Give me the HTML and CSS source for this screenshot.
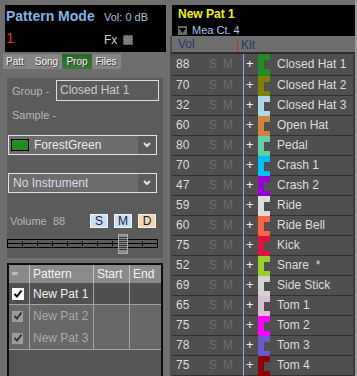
FILE: index.html
```html
<!DOCTYPE html>
<html lang="en">
<head>
    <meta charset="UTF-8">
    <meta name="viewport" content="width=device-width, initial-scale=1.0">
    <title>Pattern Mode</title>
    <link rel="stylesheet" href="styles.css">
</head>
<body>
    <div class="app">
        <div class="left">
            <div class="mode-head">
                <div class="mode-top">
                    <span class="mode-title">Pattern Mode</span>
                    <span class="vol-db">Vol: 0 dB</span>
                </div>
                <div class="mode-bottom">
                    <span class="pat-num">1</span>
                    <span class="fx">Fx</span>
                    <span class="fx-box"></span>
                </div>
            </div>

            <div class="tabs">
                <span class="tab tab-patt">Patt</span>
                <span class="tab tab-song">Song</span>
                <span class="tab tab-prop active">Prop</span>
                <span class="tab tab-files">Files</span>
            </div>

            <div class="props">
                <div class="field-row">
                    <span class="label">Group -</span>
                    <div class="text-box">Closed Hat 1</div>
                </div>
                <div class="label sample">Sample -</div>

                <div class="select first">
                    <span class="color-chip"></span>
                    <span class="select-text">ForestGreen</span>
                    <span class="select-btn">
                        <svg width="8" height="6" viewBox="0 0 8 6"><polyline points="1,1 4,4 7,1" fill="none" stroke="#e2e2e2" stroke-width="2"/></svg>
                    </span>
                </div>
                <div class="select second">
                    <span class="select-text plain">No Instrument</span>
                    <span class="select-btn">
                        <svg width="8" height="6" viewBox="0 0 8 6"><polyline points="1,1 4,4 7,1" fill="none" stroke="#e2e2e2" stroke-width="2"/></svg>
                    </span>
                </div>

                <div class="volume-row">
                    <span class="label vol-label">Volume</span>
                    <span class="label vol-val">88</span>
                    <span class="smd">S</span>
                    <span class="smd">M</span>
                    <span class="smd smd-d">D</span>
                </div>

                <svg class="slider" width="151" height="20" viewBox="0 0 151 20">
                    <rect x="0.5" y="5.5" width="150" height="8" fill="#5b5b5b" stroke="#000"/>
                    <line x1="0" y1="9.5" x2="151" y2="9.5" stroke="#000"/>
                    <g stroke="#000">
                        <line x1="15.5" y1="7" x2="15.5" y2="12"/>
                        <line x1="30.5" y1="7" x2="30.5" y2="12"/>
                        <line x1="45.5" y1="7" x2="45.5" y2="12"/>
                        <line x1="60.5" y1="7" x2="60.5" y2="12"/>
                        <line x1="75.5" y1="7" x2="75.5" y2="12"/>
                        <line x1="90.5" y1="7" x2="90.5" y2="12"/>
                        <line x1="105.5" y1="7" x2="105.5" y2="12"/>
                        <line x1="135.5" y1="7" x2="135.5" y2="12"/>
                    </g>
                    <rect x="111.5" y="0.5" width="9" height="19" fill="#8e8e8e" stroke="#a9a9a9"/>
                    <g stroke="#333">
                        <line x1="112" y1="3.5" x2="120" y2="3.5"/>
                        <line x1="112" y1="5.5" x2="120" y2="5.5"/>
                        <line x1="112" y1="7.5" x2="120" y2="7.5"/>
                        <line x1="112" y1="9.5" x2="120" y2="9.5"/>
                        <line x1="112" y1="11.5" x2="120" y2="11.5"/>
                        <line x1="112" y1="13.5" x2="120" y2="13.5"/>
                        <line x1="112" y1="15.5" x2="120" y2="15.5"/>
                    </g>
                </svg>
            </div>

            <div class="pattern-list">
                <div class="pl-row pl-head">
                    <span class="pl-cell inf">&#8734;</span>
                    <span class="pl-cell">Pattern</span>
                    <span class="pl-cell">Start</span>
                    <span class="pl-cell last">End</span>
                </div>
                <div class="pl-row current">
                    <span class="pl-cell"><span class="check"><svg width="10" height="10" viewBox="0 0 10 10"><path d="M1.5 5 L4 7.5 L8.5 1.5" fill="none" stroke="#000" stroke-width="2"/></svg></span></span>
                    <span class="pl-cell">New Pat 1</span>
                    <span class="pl-cell"></span>
                    <span class="pl-cell last"></span>
                </div>
                <div class="pl-row dim">
                    <span class="pl-cell"><span class="check"><svg width="10" height="10" viewBox="0 0 10 10"><path d="M1.5 5 L4 7.5 L8.5 1.5" fill="none" stroke="#333" stroke-width="2"/></svg></span></span>
                    <span class="pl-cell">New Pat 2</span>
                    <span class="pl-cell"></span>
                    <span class="pl-cell last"></span>
                </div>
                <div class="pl-row dim end">
                    <span class="pl-cell"><span class="check"><svg width="10" height="10" viewBox="0 0 10 10"><path d="M1.5 5 L4 7.5 L8.5 1.5" fill="none" stroke="#333" stroke-width="2"/></svg></span></span>
                    <span class="pl-cell">New Pat 3</span>
                    <span class="pl-cell"></span>
                    <span class="pl-cell last"></span>
                </div>
            </div>
        </div>

        <div class="right">
            <div class="pat-head">
                <div class="pat-name">New Pat 1</div>
                <div class="mea">
                    <span class="drop"><svg width="7" height="5" viewBox="0 0 7 5"><polygon points="0,0 7,0 3.5,5" fill="#000"/></svg></span>
                    <span>Mea Ct. 4</span>
                </div>
            </div>
            <div class="col-head">
                <span class="ch-vol">Vol</span>
                <span class="ch-kit">Kit</span>
            </div>
            <div class="kit">
                <div class="kit-row first"><span class="k-vol">88</span><span class="k-s">S</span><span class="k-m">M</span><span class="k-plus">+</span><span class="swatch" style="background-color:#228b22"></span><span class="k-name">Closed Hat 1</span></div>
                <div class="kit-row"><span class="k-vol">70</span><span class="k-s">S</span><span class="k-m">M</span><span class="k-plus">+</span><span class="swatch" style="background-color:#808000"></span><span class="k-name">Closed Hat 2</span></div>
                <div class="kit-row"><span class="k-vol">32</span><span class="k-s">S</span><span class="k-m">M</span><span class="k-plus">+</span><span class="swatch" style="background-color:#add8e6"></span><span class="k-name">Closed Hat 3</span></div>
                <div class="kit-row"><span class="k-vol">60</span><span class="k-s">S</span><span class="k-m">M</span><span class="k-plus">+</span><span class="swatch" style="background-color:#cd853f"></span><span class="k-name">Open Hat</span></div>
                <div class="kit-row"><span class="k-vol">80</span><span class="k-s">S</span><span class="k-m">M</span><span class="k-plus">+</span><span class="swatch" style="background-color:#66cdaa"></span><span class="k-name">Pedal</span></div>
                <div class="kit-row"><span class="k-vol">70</span><span class="k-s">S</span><span class="k-m">M</span><span class="k-plus">+</span><span class="swatch" style="background-color:#00bfff"></span><span class="k-name">Crash 1</span></div>
                <div class="kit-row"><span class="k-vol">47</span><span class="k-s">S</span><span class="k-m">M</span><span class="k-plus">+</span><span class="swatch" style="background-color:#9400d3"></span><span class="k-name">Crash 2</span></div>
                <div class="kit-row"><span class="k-vol">59</span><span class="k-s">S</span><span class="k-m">M</span><span class="k-plus">+</span><span class="swatch" style="background-color:#dcdcdc"></span><span class="k-name">Ride</span></div>
                <div class="kit-row"><span class="k-vol">60</span><span class="k-s">S</span><span class="k-m">M</span><span class="k-plus">+</span><span class="swatch" style="background-color:#ff6347"></span><span class="k-name">Ride Bell</span></div>
                <div class="kit-row"><span class="k-vol">75</span><span class="k-s">S</span><span class="k-m">M</span><span class="k-plus">+</span><span class="swatch" style="background-color:#dc143c"></span><span class="k-name">Kick</span></div>
                <div class="kit-row"><span class="k-vol">52</span><span class="k-s">S</span><span class="k-m">M</span><span class="k-plus">+</span><span class="swatch" style="background-color:#9acd32"></span><span class="k-name">Snare&nbsp; *</span></div>
                <div class="kit-row"><span class="k-vol">69</span><span class="k-s">S</span><span class="k-m">M</span><span class="k-plus">+</span><span class="swatch" style="background-color:#d3d3d3"></span><span class="k-name">Side Stick</span></div>
                <div class="kit-row"><span class="k-vol">65</span><span class="k-s">S</span><span class="k-m">M</span><span class="k-plus">+</span><span class="swatch" style="background-color:#d8bfd8"></span><span class="k-name">Tom 1</span></div>
                <div class="kit-row"><span class="k-vol">75</span><span class="k-s">S</span><span class="k-m">M</span><span class="k-plus">+</span><span class="swatch" style="background-color:#ff00ff"></span><span class="k-name">Tom 2</span></div>
                <div class="kit-row"><span class="k-vol">78</span><span class="k-s">S</span><span class="k-m">M</span><span class="k-plus">+</span><span class="swatch" style="background-color:#6a5acd"></span><span class="k-name">Tom 3</span></div>
                <div class="kit-row"><span class="k-vol">75</span><span class="k-s">S</span><span class="k-m">M</span><span class="k-plus">+</span><span class="swatch" style="background-color:#8b0000"></span><span class="k-name">Tom 4</span></div>
            </div>
        </div>
    </div>
</body>
</html>
```

FILE: styles.css
```css
body {
    margin: 0;
    width: 357px;
    height: 376px;
    overflow: hidden;
    background: linear-gradient(to left, #9c9c9c 2px, #6e6e6e 2px);
    font-family: 'Liberation Sans', Arial, sans-serif;
    font-size: 12px;
}
.app { display: flex; height: 376px; padding-top: 5px; box-sizing: border-box; }

/* left side */
.left { width: 166px; display: flex; flex-direction: column; }
.mode-head { margin-left: 5px; width: 161px; height: 47px; background: #000; box-sizing: border-box; padding: 3px 0 0 1px; }
.mode-top { display: flex; align-items: baseline; height: 18px; }
.mode-title { width: 98px; font-size: 14px; font-weight: bold; color: #82b4e6; }
.vol-db { font-size: 11px; color: #a9c1dc; }
.mode-bottom { display: flex; align-items: center; margin-top: 4px; height: 14px; }
.pat-num { width: 98px; font-size: 15px; color: #e8342c; }
.fx { color: #cfcfcf; font-size: 12px; width: 19px; margin-top: 6px; }
.fx-box { width: 8px; height: 8px; background: #7d7d7d; border: 1px dotted #3a3a3a; margin-top: 6px; }

.tabs { display: flex; margin: 2px 0 0 3px; width: 118px; height: 15px; background: #858585; }
.tab { font-size: 10px; line-height: 15px; text-align: center; color: #f2f2f2; text-shadow: 1px 1px 0 #3c3c3c; }
.tab-patt { width: 24px; }
.tab-song { width: 31px; margin-left: 4px; }
.tab-prop { width: 30px; }
.tab-files { width: 28px; }
.tab.active { background: linear-gradient(#236823, #3a7a3a); }

.props { margin: 9px 0 0 7px; width: 156px; height: 180px; flex: none; background: #5b5b5b; box-sizing: border-box; padding-top: 2px; }
.label { color: #bdb5ad; font-size: 11px; }
.field-row { display: flex; align-items: center; height: 21px; }
.field-row .label { width: 49px; padding-left: 5px; box-sizing: border-box; }
.text-box { width: 103px; height: 21px; box-sizing: border-box; border: 1px solid #dcdcdc; color: #c9c9c9; padding-left: 3px; line-height: 19px; font-size: 12px; }
.sample { margin-top: 7px; padding-left: 5px; line-height: 14px; }

.select { display: flex; align-items: center; margin-left: 1px; width: 149px; height: 20px; border: 1px solid #e2e2e2; box-sizing: border-box; background: #6d6d6d; }
.select.first { margin-top: 13px; }
.select.second { margin-top: 18px; }
.color-chip { width: 16px; height: 10px; background: #228b22; border: 1px solid #000; margin: 0 5px 0 2px; }
.select-text { flex: 1; color: #ececec; font-size: 12px; }
.select-text.plain { padding-left: 4px; color: #dcdce8; }
.select-btn { width: 18px; height: 18px; background: #5b5b5b; display: flex; align-items: center; justify-content: center; }

.volume-row { display: flex; align-items: center; height: 14px; margin-top: 21px; padding-left: 3px; }
.vol-label { width: 43px; }
.vol-val { width: 37px; }
.smd { width: 18px; height: 14px; margin-right: 6px; box-sizing: border-box; border: 1px solid #eef6fb; background: #c7dfef; color: #1c1c3c; font-size: 12px; line-height: 12px; text-align: center; }
.smd-d { background: #f1d6b2; border-color: #fbeedd; }
.slider { display: block; margin-top: 6px; }

.pattern-list { margin: 5px 0 0 7px; width: 156px; flex: 1; box-sizing: border-box; border: 2px solid #0c0c0c; border-bottom: none; background: #555; }
.pl-row { display: flex; height: 20px; }
.pl-cell { box-sizing: border-box; border-right: 1px solid #a4a4a4; padding-left: 3px; line-height: 20px; font-size: 12px; display: flex; align-items: center; }
.pl-cell:nth-child(1) { width: 21px; padding-left: 3px; }
.pl-cell:nth-child(2) { width: 64px; }
.pl-cell:nth-child(3) { width: 36px; }
.pl-cell.last { flex: 1; border-right: none; }
.pl-head { height: 18px; background: #8a8a8a; color: #f4f4f4; }
.pl-head .pl-cell { border-right-color: #c4c4c4; line-height: 18px; }
.pl-head .inf { font-size: 8px; }
.pl-row.current { height: 21px; background: #505050; color: #f0f0f0; border-bottom: 1px solid #a4a4a4; }
.pl-row.dim { height: 22px; background: #686868; color: #a9a9a9; }
.pl-row.end { border-bottom: 1px solid #a4a4a4; }
.check { width: 12px; height: 12px; background: #fff; display: flex; align-items: center; justify-content: center; }
.dim .check { width: 11px; height: 11px; background: #9c9c9c; }

/* right side */
.right { margin-left: 4px; width: 185px; display: flex; flex-direction: column; }
.pat-head { margin-left: 2px; height: 32px; background: #000; box-sizing: border-box; padding: 2px 0 0 6px; overflow: hidden; }
.pat-name { font-size: 12px; font-weight: bold; color: #f2f200; line-height: 15px; }
.mea { display: flex; align-items: center; height: 11px; line-height: 11px; margin-top: 3px; color: #a4c8ea; font-size: 11px; }
.drop { width: 9px; height: 9px; background: #6a6a6a; margin-right: 5px; display: flex; align-items: center; justify-content: center; }

.col-head { display: flex; align-items: center; height: 16px; background: #6e6e6e; border-left: 2px solid #4e4e4e; border-bottom: 2px solid #2c2c2c; }
.ch-vol { width: 65px; padding-left: 6px; box-sizing: border-box; color: #2c3466; font-size: 12px; }
.ch-kit { align-self: flex-end; height: 13px; line-height: 12px; border-left: 1px solid #d02828; padding-left: 3px; color: #2c3466; font-size: 12px; }

.kit { flex: 1; border-left: 2px solid #4e4e4e; border-right: 2px solid #3a3a3a; }
.kit-row { display: flex; height: 20px; line-height: 18px; background: linear-gradient(to top, #303030 1px, transparent 1px) #4f4f4f; color: #dedede; font-size: 12px; }
.kit-row.first { height: 22px; line-height: 20px; }
.k-vol { width: 37px; padding-left: 4px; box-sizing: border-box; }
.k-s { width: 14px; color: #6c6c6c; }
.k-m { width: 20px; color: #6c6c6c; }
.k-plus { width: 15px; box-sizing: border-box; border-left: 1px solid #8eaede; padding-left: 2px; color: #f4f4f4; font-size: 13px; }
.swatch { width: 12px; background-image: linear-gradient(to right, transparent 6px, #4f4f4f 6px); background-size: 100% 9px; background-position: 0 6px; background-repeat: no-repeat; }
.k-name { padding-left: 7px; }
```
